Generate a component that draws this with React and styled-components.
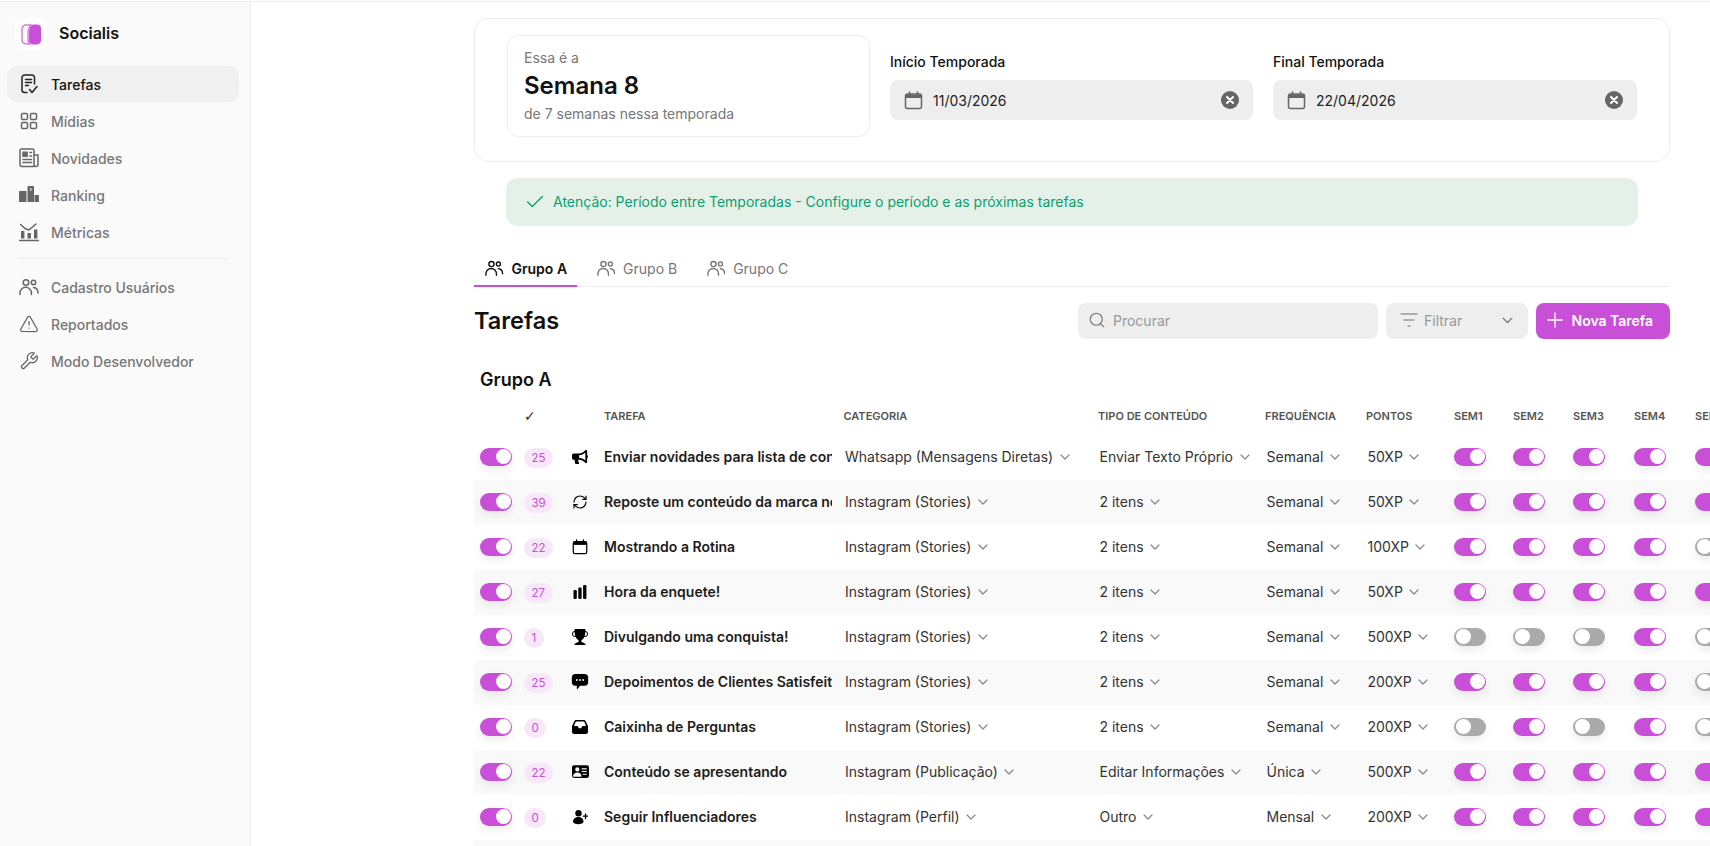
import React from 'react';
import styled, { createGlobalStyle } from 'styled-components';
import { LuTriangleAlert, LuWrench, LuPlus, LuSearch, LuCheck, LuRefreshCw } from 'react-icons/lu';
import { BsTrophyFill, BsPersonVcardFill } from 'react-icons/bs';
import { FaBullhorn } from 'react-icons/fa';

const accent = '#c94fd8';
const tableColumns = '50px 44px 24px 12px 239.5px 254.5px 167px 101px 88px 59px 60px 61px 61px 60px';

const GlobalStyle = createGlobalStyle`
  * { box-sizing: border-box; }
  html, body { margin: 0; height: 100%; overflow: hidden; background: #fff; }
  body { font-family: Inter, "Noto Sans", sans-serif; color: #1c1c1c; }
`;

// Shell

const TopLine = styled.div`
  height: 1px;
  margin-top: 1px;
  background: #eeeeee;
`;

const Shell = styled.div`
  display: flex;
  height: 844px;
  overflow: hidden;
`;

// Sidebar

const Sidebar = styled.aside`
  flex: 0 0 251px;
  background: #fafafa;
  border-right: 1px solid #eeeeee;
  padding: 16px 11px 0 7px;
`;

const Brand = styled.div`
  display: flex;
  align-items: center;
  gap: 12px;
  padding-left: 8px;
  margin-bottom: 16px;
`;

const LogoBox = styled.div`
  width: 32px;
  height: 32px;
  border-radius: 8px;
  background: #fff;
  display: flex;
  align-items: center;
  justify-content: center;
`;

const BrandName = styled.span`
  font-size: 16px;
  line-height: 20px;
  font-weight: 600;
  color: #111;
  padding-bottom: 2px;
`;

const NavItem = styled.div`
  display: flex;
  align-items: center;
  height: 36px;
  margin-bottom: 1px;
  padding-left: 12px;
  gap: 12px;
  border-radius: 10px;
  font-size: 14px;
  font-weight: 500;
  color: ${({ $active }) => ($active ? '#111' : '#777')};
  background: ${({ $active }) => ($active ? '#f0f0f0' : 'transparent')};
  svg {
    flex: 0 0 20px;
    width: 20px;
    height: 20px;
  }
`;

const NavDivider = styled.div`
  height: 1px;
  margin: 8px 10px 10px;
  background: #ececec;
`;

// Season card

const Main = styled.main`
  flex: 1;
  min-width: 0;
  padding: 16px 0 0 223px;
`;

const Narrow = styled.div`
  width: 1196px;
`;

const SeasonCard = styled.section`
  display: grid;
  grid-template-columns: 363px 363px 364px;
  column-gap: 20px;
  align-items: start;
  height: 144px;
  padding: 16px 32px;
  border: 1px solid #eeeeee;
  border-radius: 14px;
`;

const WeekCard = styled.div`
  height: 102px;
  padding: 13px 16px;
  border: 1px solid #eeeeee;
  border-radius: 12px;
`;

const WeekHint = styled.div`
  font-size: 14px;
  line-height: 18px;
  color: #777;
`;

const WeekTitle = styled.div`
  font-size: 24px;
  line-height: 32px;
  font-weight: 600;
  color: #111;
  margin: 3px 0 2.5px;
`;

const DateField = styled.div`
  padding-top: 17px;
`;

const DateLabel = styled.div`
  font-size: 14px;
  line-height: 20px;
  font-weight: 500;
  color: #111;
  margin-bottom: 8px;
`;

const DateInput = styled.div`
  display: flex;
  align-items: center;
  height: 40px;
  padding: 0 14px 0 14px;
  gap: 10px;
  border-radius: 8px;
  background: #eeeeee;
  font-size: 14px;
  color: #222;
  svg:last-child {
    margin-left: auto;
  }
`;

const Alert = styled.div`
  display: flex;
  align-items: center;
  gap: 7px;
  height: 48px;
  margin: 16px 32px 0;
  padding: 0 0 1px 18px;
  border-radius: 12px;
  background: #e5f1e8;
  color: #0ba06f;
  font-size: 14px;
`;

// Tabs

const TabRow = styled.div`
  display: flex;
  gap: 8.5px;
  margin-top: 24px;
  height: 37px;
  border-bottom: 1px solid #eeeeee;
`;

const Tab = styled.div`
  display: flex;
  align-items: center;
  gap: 8px;
  height: 37px;
  padding: 2px 10px 0 11px;
  font-size: 14px;
  font-weight: ${({ $active }) => ($active ? 600 : 400)};
  color: ${({ $active }) => ($active ? '#111' : '#777')};
  border-bottom: 2px solid ${({ $active }) => ($active ? accent : 'transparent')};
`;

// Toolbar

const Toolbar = styled.div`
  display: flex;
  align-items: center;
  gap: 8px;
  margin-top: 16px;
  height: 36px;
`;

const PageTitle = styled.h1`
  flex: 1;
  margin: 0 0 2px;
  font-size: 23.5px;
  font-weight: 600;
  color: #111;
`;

const SearchBox = styled.div`
  display: flex;
  align-items: center;
  gap: 7px;
  width: 300px;
  height: 36px;
  padding: 0 0 2px 10px;
  border-radius: 8px;
  background: #eeeeee;
  color: #999;
  font-size: 14px;
`;

const FilterBox = styled(SearchBox)`
  width: 142px;
  gap: 6px;
  padding: 0 15px 2px 14px;
  justify-content: flex-start;
  svg:last-child {
    margin-left: auto;
  }
`;

const NewButton = styled.button`
  display: flex;
  align-items: center;
  gap: 4.5px;
  width: 134px;
  height: 36px;
  padding: 0 0 2px 7px;
  border: 0;
  border-radius: 8px;
  background: ${accent};
  color: #fff;
  font: 600 14px Inter, sans-serif;
`;

// Table

const GroupTitle = styled.h2`
  margin: 29px 0 11px 6px;
  font-size: 18px;
  line-height: 24px;
  font-weight: 600;
  color: #111;
`;

const TableHead = styled.div`
  display: grid;
  grid-template-columns: ${tableColumns};
  height: 32px;
  padding-bottom: 7px;
  align-items: center;
  font-size: 11px;
  font-weight: 600;
  color: #555;
  text-transform: uppercase;
  white-space: nowrap;
`;

const HeadCell = styled.div`
  grid-column: ${({ $col }) => $col || 'auto'};
`;

const CheckHead = styled(HeadCell)`
  font: 700 14px "DejaVu Sans", sans-serif;
  color: #333;
`;

const Row = styled.div`
  display: grid;
  grid-template-columns: ${tableColumns};
  align-items: center;
  height: 45px;
  padding-bottom: 2px;
  background: ${({ $striped }) => ($striped ? '#f9f9f9' : '#fff')};
`;

const Switch = styled.span`
  display: block;
  width: 32px;
  height: 18px;
  padding: 1.5px;
  border-radius: 9px;
  background: ${({ $on }) => ($on ? accent : '#aaaaaa')};
  box-shadow: 0 4px 8px rgba(0, 0, 0, 0.08);
  &::after {
    content: '';
    display: block;
    width: 15px;
    height: 15px;
    border-radius: 50%;
    background: #fff;
    margin-left: ${({ $on }) => ($on ? '14px' : '0')};
  }
`;

const SwitchCell = styled.div`
  padding-left: 6px;
`;

const Badge = styled.span`
  display: inline-block;
  height: 20px;
  padding: 0 7.5px;
  border-radius: 10px;
  background: #f6e7f9;
  color: ${accent};
  font-size: 11.5px;
  line-height: 20px;
`;

const TaskIcon = styled.div`
  display: flex;
  justify-content: center;
  color: #000;
`;

const TaskName = styled.div`
  grid-column: 5;
  margin-right: 12px;
  overflow: hidden;
  white-space: nowrap;
  font-size: 14px;
  font-weight: 600;
  color: #1c1c1c;
`;

const SelectCell = styled.div`
  display: flex;
  align-items: center;
  gap: 6.5px;
  padding-left: 1.5px;
  font-size: 14px;
  color: #333;
  white-space: nowrap;
`;

// Icons

const Chevron = ({ size = 10, color = '#888' }) => (
  <svg width={size} height={size * 0.6} viewBox="0 0 10 6" fill="none">
    <path d="M1 1l4 4 4-4" stroke={color} strokeWidth="1.2" strokeLinecap="round" strokeLinejoin="round" />
  </svg>
);

const Logo = () => (
  <svg width="21" height="21" viewBox="0 0 21 21" fill="none">
    <path d="M5 1h5C8 3 7 5.500 7 9v7c0 1.500.4 3 1.500 4H5c-2.300 0-4-1.700-4-4V5c0-2.300 1.700-4 4-4z" stroke="#d875e4" strokeWidth="1.400" />
    <path d="M13 .5h3c2.500 0 4 1.600 4 4V16c0 2.800-1.800 4.500-4.500 4.500h-3C10.500 20.500 8 19 8 16.500V9c0-4 1.500-8.500 5-8.500z" fill={accent} />
  </svg>
);

const TaskListIcon = () => (
  <svg viewBox="0 0 20 20" fill="none" stroke="#222" strokeWidth="1.500" strokeLinecap="round" strokeLinejoin="round">
    <path d="M8 18.500H5.500A2.500 2.500 0 0 1 3 16V3.500A2.500 2.500 0 0 1 5.500 1h7.500A2.500 2.500 0 0 1 15.500 3.500V10" />
    <path d="M6.500 5.500h6M6.500 8.500h6M6.500 11.500h3M10.500 15.500l2.500 3 5-6" />
  </svg>
);

const GridIcon = () => (
  <svg viewBox="0 0 20 20" fill="none" stroke="#666" strokeWidth="1.500">
    <rect x="2.500" y="2.500" width="6" height="6" rx="1.300" />
    <rect x="11.500" y="2.500" width="6" height="6" rx="1.300" />
    <rect x="2.500" y="11.500" width="6" height="6" rx="1.300" />
    <rect x="11.500" y="11.500" width="6" height="6" rx="1.300" />
  </svg>
);

const NewsIcon = () => (
  <svg viewBox="0 0 20 20" fill="none" stroke="#666" strokeWidth="1.500" strokeLinecap="round">
    <path d="M15 18.500H3a2 2 0 0 1-2-2V2.500A1.500 1.500 0 0 1 2.500 1h11A1.500 1.500 0 0 1 15 2.500V16.500a2 2 0 0 0 4 0V7h-4" />
    <rect x="3.800" y="4" width="4.500" height="4.500" fill="#666" strokeWidth="1" />
    <path d="M10.800 4.500h1.700M10.800 8h1.700M4 11.500h8.500M4 14.500h8.500" />
  </svg>
);

const PodiumIcon = () => (
  <svg viewBox="0 0 20 20" fill="#666">
    <rect x="0" y="6" width="7.500" height="11" rx="0.600" />
    <path d="M8.500 1.600A.6.6 0 0 1 9.100 1h5.300a.6.6 0 0 1 .6.6V17H8.500zM11.400 3v3h1V3z" fillRule="evenodd" />
    <rect x="15.500" y="10" width="4.500" height="7" rx="0.400" />
  </svg>
);

const ChartIcon = () => (
  <svg viewBox="0 0 20 20" fill="none" stroke="#666" strokeLinecap="round" strokeLinejoin="round">
    <path d="M.5 18.500h19" strokeWidth="1.500" />
    <path d="M1.700 2.500L6 6.500l4 1.500 7-6" strokeWidth="1.600" />
    <rect x="2" y="9" width="3.400" height="7.500" fill="#666" stroke="none" />
    <rect x="8.500" y="11" width="3.400" height="5.500" fill="#666" stroke="none" />
    <rect x="15" y="7.500" width="3.400" height="9" fill="#666" stroke="none" />
  </svg>
);

const PeopleIcon = ({ color = '#666', size = 20 }) => (
  <svg width={size} height={size} viewBox="0 0 20 20" fill="none" stroke={color} strokeWidth="1.500" strokeLinecap="round">
    <circle cx="7" cy="5.500" r="2.800" />
    <circle cx="14.500" cy="5.500" r="2.200" />
    <path d="M1 17.500V16a5.700 5.700 0 0 1 11.400 0v1.500M14.500 10.500c2.800.2 4.500 2.500 4.500 5.500" />
  </svg>
);

const CalendarIcon = ({ size = 19, color = '#666' }) => (
  <svg width={size} height={size} viewBox="0 0 19 19" fill="none">
    <rect x="1.500" y="3" width="16" height="14.500" rx="2" stroke={color} strokeWidth="1.500" />
    <path d="M2 3.500h15v3.500H2z" fill={color} />
    <path d="M5.500 1v3.500M13.500 1v3.500" stroke={color} strokeWidth="1.500" strokeLinecap="round" />
  </svg>
);

const ClearIcon = () => (
  <svg width="18" height="18" viewBox="0 0 18 18" fill="none">
    <circle cx="9" cy="9" r="9" fill="#666" />
    <path d="M6 6l6 6M12 6l-6 6" stroke="#fff" strokeWidth="2" strokeLinecap="round" />
  </svg>
);

const FilterIcon = () => (
  <svg width="18" height="16" viewBox="0 0 18 16" fill="none" stroke="#999" strokeWidth="1.300" strokeLinecap="round">
    <path d="M1 2h16M4 8h10M8 14h2" />
  </svg>
);

const PollIcon = () => (
  <svg width="16" height="16" viewBox="0 0 16 16" fill="#000">
    <rect x="1.500" y="6" width="3.300" height="9" rx="1.200" />
    <rect x="6.300" y="3.500" width="3.300" height="11.500" rx="1.200" />
    <rect x="11.100" y="1" width="3.300" height="14" rx="1.200" />
  </svg>
);

const ChatIcon = () => (
  <svg width="18" height="17" viewBox="0 0 17 16" fill="#000">
    <path
      fillRule="evenodd"
      d="M4 1h9c1.900 0 3.200 1.300 3.200 3.200v4.600c0 1.900-1.300 3.200-3.200 3.200H8.500l-2.300 3c-.3.300-.7.100-.7-.3V12H4C2.100 12 .8 10.700.8 8.800V4.200C.8 2.300 2.100 1 4 1zM5.500 5.700a.9.900 0 1 0 0 1.800.9.900 0 0 0 0-1.800zM8.500 5.700a.9.900 0 1 0 0 1.800.9.900 0 0 0 0-1.800zM11.500 5.700a.9.900 0 1 0 0 1.800.9.900 0 0 0 0-1.800z"
    />
  </svg>
);

const TrayIcon = () => (
  <svg width="16" height="16" viewBox="0 0 16 16" fill="#000">
    <path
      fillRule="evenodd"
      d="M4.500 1h7c1 0 1.800.5 2.300 1.400l1.700 3.600c.3.500.5 1.100.5 1.700v5.300c0 1.300-1 2-2.200 2H2.200C1 15 0 14.300 0 13V7.700c0-.6.200-1.200.5-1.700l1.700-3.600C2.700 1.500 3.500 1 4.500 1zM4.500 2.500c-.5 0-.8.200-1 .7L2 7h3.500L7 9.300h2L10.500 7H14l-1.500-3.800c-.2-.5-.5-.7-1-.7z"
    />
  </svg>
);

const PersonPlusIcon = () => (
  <svg width="16" height="16" viewBox="0 0 16 16" fill="#000">
    <circle cx="6.500" cy="4.200" r="3.200" />
    <path d="M1 12.500c0-2.700 2.500-4.500 5.500-4.500s5 1.800 5 4.500c0 1.800-2.300 2.800-5.200 2.800S1 14.300 1 12.500z" />
    <path d="M13.500 5v4.500M11.300 7.200h4.500" stroke="#000" strokeWidth="1.300" strokeLinecap="round" />
  </svg>
);

// Data

const sync = () => <LuRefreshCw size={16} strokeWidth={1.7} />;
const calendar = () => <CalendarIcon size={16} color="#000" />;
const megaphone = () => <FaBullhorn size={16} />;
const trophy = () => <BsTrophyFill size={16} />;
const vcard = () => <BsPersonVcardFill size={17} />;

const tasks = [
  { id: 1, count: 25, icon: megaphone, name: 'Enviar novidades para lista de contatos', category: 'Whatsapp (Mensagens Diretas)', type: 'Enviar Texto Próprio', frequency: 'Semanal', points: '50XP', weeks: [1, 1, 1, 1, 1] },
  { id: 2, count: 39, icon: sync, name: 'Reposte um conteúdo da marca nos stories', category: 'Instagram (Stories)', type: '2 itens', frequency: 'Semanal', points: '50XP', weeks: [1, 1, 1, 1, 1] },
  { id: 3, count: 22, icon: calendar, name: 'Mostrando a Rotina', category: 'Instagram (Stories)', type: '2 itens', frequency: 'Semanal', points: '100XP', weeks: [1, 1, 1, 1, 0] },
  { id: 4, count: 27, icon: PollIcon, name: 'Hora da enquete!', category: 'Instagram (Stories)', type: '2 itens', frequency: 'Semanal', points: '50XP', weeks: [1, 1, 1, 1, 1] },
  { id: 5, count: 1, icon: trophy, name: 'Divulgando uma conquista!', category: 'Instagram (Stories)', type: '2 itens', frequency: 'Semanal', points: '500XP', weeks: [0, 0, 0, 1, 0] },
  { id: 6, count: 25, icon: ChatIcon, name: 'Depoimentos de Clientes Satisfeitos', category: 'Instagram (Stories)', type: '2 itens', frequency: 'Semanal', points: '200XP', weeks: [1, 1, 1, 1, 0] },
  { id: 7, count: 0, icon: TrayIcon, name: 'Caixinha de Perguntas', category: 'Instagram (Stories)', type: '2 itens', frequency: 'Semanal', points: '200XP', weeks: [0, 1, 0, 1, 0] },
  { id: 8, count: 22, icon: vcard, name: 'Conteúdo se apresentando', category: 'Instagram (Publicação)', type: 'Editar Informações', frequency: 'Única', points: '500XP', weeks: [1, 1, 1, 1, 1] },
  { id: 9, count: 0, icon: PersonPlusIcon, name: 'Seguir Influenciadores', category: 'Instagram (Perfil)', type: 'Outro', frequency: 'Mensal', points: '200XP', weeks: [1, 1, 1, 1, 1] },
];

const Select = ({ children }) => (
  <SelectCell>
    {children}
    <Chevron />
  </SelectCell>
);

export default function App() {
  return (
    <>
      <GlobalStyle />
      <TopLine />
      <Shell>
        <Sidebar>
          <Brand>
            <LogoBox>
              <Logo />
            </LogoBox>
            <BrandName>Socialis</BrandName>
          </Brand>
          <NavItem $active>
            <TaskListIcon />
            Tarefas
          </NavItem>
          <NavItem>
            <GridIcon />
            Mídias
          </NavItem>
          <NavItem>
            <NewsIcon />
            Novidades
          </NavItem>
          <NavItem>
            <PodiumIcon />
            Ranking
          </NavItem>
          <NavItem>
            <ChartIcon />
            Métricas
          </NavItem>
          <NavDivider />
          <NavItem>
            <PeopleIcon />
            Cadastro Usuários
          </NavItem>
          <NavItem>
            <LuTriangleAlert color="#666" strokeWidth={1.5} />
            Reportados
          </NavItem>
          <NavItem>
            <LuWrench color="#666" strokeWidth={1.5} />
            Modo Desenvolvedor
          </NavItem>
        </Sidebar>

        <Main>
          <Narrow>
            <SeasonCard>
              <WeekCard>
                <WeekHint>Essa é a</WeekHint>
                <WeekTitle>Semana 8</WeekTitle>
                <WeekHint>de 7 semanas nessa temporada</WeekHint>
              </WeekCard>
              <DateField>
                <DateLabel>Início Temporada</DateLabel>
                <DateInput>
                  <CalendarIcon />
                  11/03/2026
                  <ClearIcon />
                </DateInput>
              </DateField>
              <DateField>
                <DateLabel>Final Temporada</DateLabel>
                <DateInput>
                  <CalendarIcon />
                  22/04/2026
                  <ClearIcon />
                </DateInput>
              </DateField>
            </SeasonCard>

            <Alert>
              <LuCheck size={22} strokeWidth={1.5} />
              Atenção: Período entre Temporadas - Configure o período e as próximas tarefas
            </Alert>

            <TabRow>
              <Tab $active>
                <PeopleIcon color="#111" size={18.5} />
                Grupo A
              </Tab>
              <Tab>
                <PeopleIcon color="#777" size={18.5} />
                Grupo B
              </Tab>
              <Tab>
                <PeopleIcon color="#777" size={18.5} />
                Grupo C
              </Tab>
            </TabRow>

            <Toolbar>
              <PageTitle>Tarefas</PageTitle>
              <SearchBox>
                <LuSearch size={18} color="#777" strokeWidth={1.5} />
                Procurar
              </SearchBox>
              <FilterBox>
                <FilterIcon />
                Filtrar
                <Chevron size={11} color="#777" />
              </FilterBox>
              <NewButton>
                <LuPlus size={24} strokeWidth={1.4} />
                Nova Tarefa
              </NewButton>
            </Toolbar>

            <GroupTitle>Grupo A</GroupTitle>
          </Narrow>

          <TableHead>
            <CheckHead $col={2}>✓</CheckHead>
            <HeadCell $col={5}>Tarefa</HeadCell>
            <HeadCell>Categoria</HeadCell>
            <HeadCell>Tipo de Conteúdo</HeadCell>
            <HeadCell>Frequência</HeadCell>
            <HeadCell>Pontos</HeadCell>
            <HeadCell>Sem1</HeadCell>
            <HeadCell>Sem2</HeadCell>
            <HeadCell>Sem3</HeadCell>
            <HeadCell>Sem4</HeadCell>
            <HeadCell>Sem5</HeadCell>
          </TableHead>

          {tasks.map(({ id, count, icon: Icon, name, category, type, frequency, points, weeks }, index) => (
            <Row key={id} $striped={index % 2 === 1}>
              <SwitchCell>
                <Switch $on />
              </SwitchCell>
              <div>
                <Badge>{count}</Badge>
              </div>
              <TaskIcon>
                <Icon />
              </TaskIcon>
              <TaskName>{name}</TaskName>
              <Select>{category}</Select>
              <Select>{type}</Select>
              <Select>{frequency}</Select>
              <Select>{points}</Select>
              {weeks.map((on, week) => (
                <div key={week}>
                  <Switch $on={!!on} />
                </div>
              ))}
            </Row>
          ))}
          <Row $striped />
        </Main>
      </Shell>
    </>
  );
}
